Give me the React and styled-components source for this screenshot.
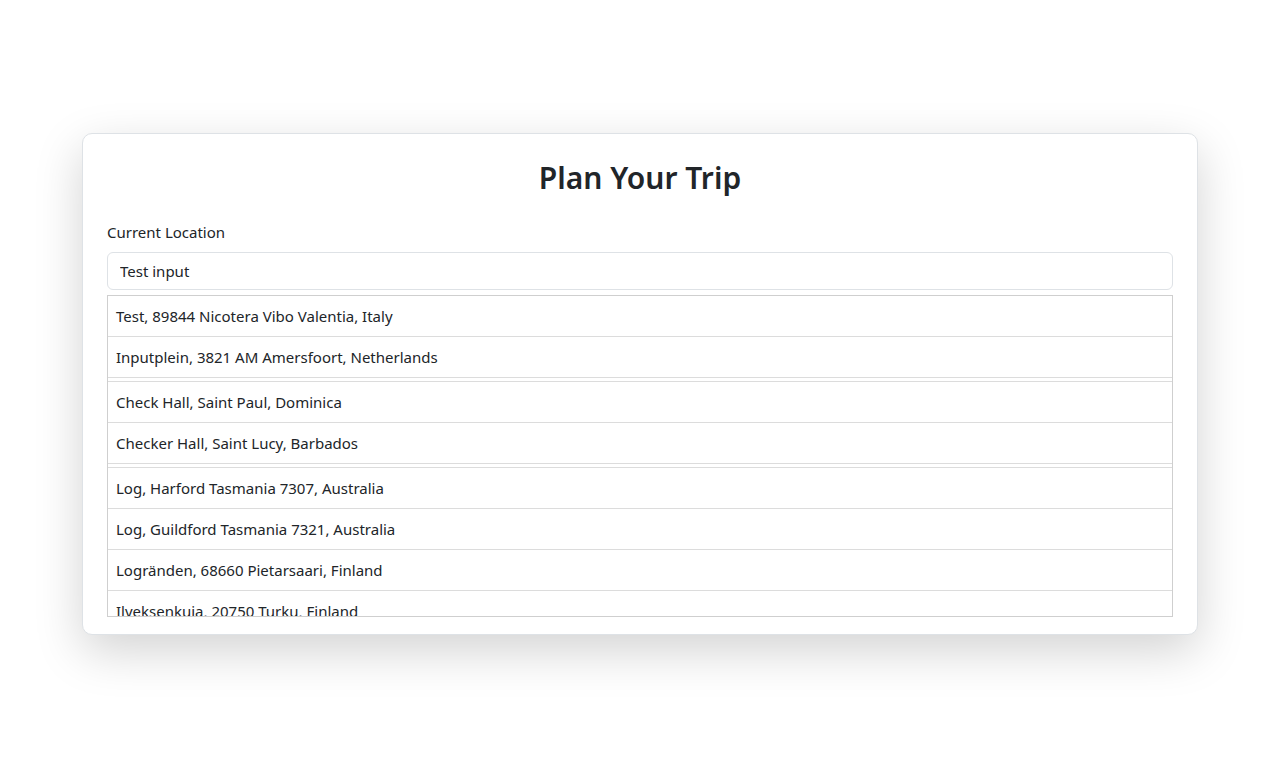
import React, { useState } from "react";
import styled, { createGlobalStyle } from "styled-components";

const colors = {
  text: "#212529",
  border: "#dee2e6",
  listBorder: "#cfcfcf",
  rowBorder: "#dcdcdc",
};

const GlobalStyle = createGlobalStyle`
  body {
    margin: 0;
    background: #fff;
    font-family: "Noto Sans", "Open Sans", sans-serif;
    color: ${colors.text};
  }
  * { box-sizing: border-box; }
`;

const Page = styled.div`
  padding: 133px 0 0 82px;
  min-height: 768px;
`;

const Card = styled.div`
  width: 1116px;
  background: #fff;
  border: 1px solid ${colors.border};
  border-radius: 10px;
  box-shadow: 0 1rem 3rem rgba(0, 0, 0, 0.175);
  padding: 25px 24px 17px;
`;

const Title = styled.h2`
  margin: 0 0 23px;
  text-align: center;
  font-size: 30px;
  font-weight: 600;
  line-height: 38px;
`;

const Label = styled.label`
  display: block;
  font-size: 15px;
  line-height: 24px;
  margin-bottom: 8px;
`;

const Input = styled.input`
  display: block;
  width: 100%;
  height: 38px;
  padding: 6px 12px;
  font-family: inherit;
  font-size: 15px;
  color: ${colors.text};
  border: 1px solid ${colors.border};
  border-radius: 6px;
  outline: none;
  margin-bottom: 5px;
`;

const Results = styled.div`
  height: 322px;
  border: 1px solid ${colors.listBorder};
  overflow: hidden;
`;

const Group = styled.ul`
  list-style: none;
  margin: 0;
  padding: 0;

  & + & {
    margin-top: 3px;
    border-top: 1px solid ${colors.rowBorder};
  }
`;

const Item = styled.li`
  height: 41px;
  padding: 0 8px;
  display: flex;
  align-items: center;
  font-size: 15px;
  border-bottom: 1px solid ${colors.rowBorder};
  cursor: pointer;
`;

const groups = [
  [
    "Test, 89844 Nicotera Vibo Valentia, Italy",
    "Inputplein, 3821 AM Amersfoort, Netherlands",
  ],
  ["Check Hall, Saint Paul, Dominica", "Checker Hall, Saint Lucy, Barbados"],
  [
    "Log, Harford Tasmania 7307, Australia",
    "Log, Guildford Tasmania 7321, Australia",
    "Logränden, 68660 Pietarsaari, Finland",
    "Ilveksenkuja, 20750 Turku, Finland",
  ],
];

export default function App() {
  const [query, setQuery] = useState("Test input");

  return (
    <Page>
      <GlobalStyle />
      <Card>
        <Title>Plan Your Trip</Title>
        <Label htmlFor="location">Current Location</Label>
        <Input
          id="location"
          value={query}
          onChange={(e) => setQuery(e.target.value)}
        />
        <Results>
          {groups.map((group, i) => (
            <Group key={i}>
              {group.map((place) => (
                <Item key={place}>{place}</Item>
              ))}
            </Group>
          ))}
        </Results>
      </Card>
    </Page>
  );
}
